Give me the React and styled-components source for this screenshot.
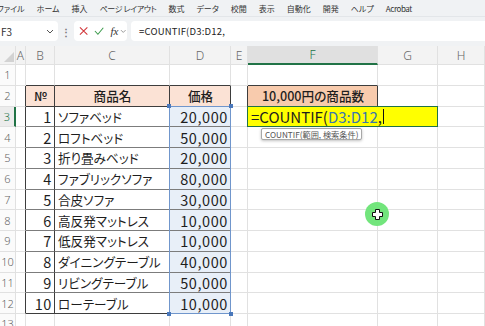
import React from 'react'
import styled, { createGlobalStyle } from 'styled-components'

const GlobalStyle = createGlobalStyle`
  html, body { margin: 0; padding: 0; overflow: hidden; }
  body {
    font-family: "Noto Sans CJK JP", "Noto Sans", sans-serif;
    font-feature-settings: "palt";
    background: #fff;
  }
`

const LIGHT = '#e1e1e1'
const DARK = '#3d3d3d'
const MID = '#7c7c7c'
const GREEN = '#217346'

const Frame = styled.div`
  position: relative;
  width: 485px;
  height: 326px;
  overflow: hidden;
  background: #f0f2f4;
`

const MenuBar = styled.div`
  display: flex;
  align-items: center;
  height: 16px;
  gap: 12px;
  font-size: 8px;
  color: #333;
  white-space: nowrap;
  border-bottom: 1px solid #e3e6e9;
`

const MenuItem = styled.span`
  margin-left: ${p => p.$first ? '-3px' : '0'};
  letter-spacing: ${p => p.$tight ? '-0.4px' : '0'};
`

const FormulaBar = styled.div`
  display: flex;
  align-items: center;
  height: 20px;
  margin-top: 4px;
  gap: 4px;
`

const NameBox = styled.div`
  display: flex;
  align-items: center;
  justify-content: space-between;
  width: 60px;
  height: 20px;
  box-sizing: border-box;
  padding: 0 4px 0 3px;
  margin-left: -2px;
  background: #fff;
  border-radius: 4px;
  font-size: 10px;
  color: #333;
`

const Dots = styled.div`
  width: 8px;
  display: flex;
  justify-content: center;
  color: #777;
  font-size: 10px;
  font-weight: bold;
`

const IconBox = styled.div`
  display: flex;
  align-items: center;
  gap: 6px;
  width: 53px;
  height: 20px;
  box-sizing: border-box;
  padding-left: 5px;
  background: #fff;
  border-radius: 4px;
`

const Fx = styled.span`
  font-family: "Liberation Serif", serif;
  font-style: italic;
  font-size: 11px;
  color: #333;
`

const FormulaInput = styled.div`
  flex: 1;
  height: 20px;
  display: flex;
  align-items: center;
  padding-left: 8px;
  background: #fff;
  border-radius: 4px 0 0 4px;
  font-size: 9.5px;
  color: #222;
  letter-spacing: 0.2px;
`

const Sheet = styled.div`
  display: grid;
  grid-template-columns: 16px 10px 29px 115px 61px 17px 130px 60px 47px;
  grid-template-rows: 19px repeat(13, 20.75px);
  margin-top: 5px;
  background: #fff;
`

const ColHead = styled.div`
  grid-row: 1;
  grid-column: ${p => p.$col + 1};
  display: flex;
  align-items: center;
  justify-content: center;
  box-sizing: border-box;
  background: ${p => p.$active ? '#e0e0e0' : '#f3f3f3'};
  border-right: 1px solid ${LIGHT};
  border-bottom: ${p => p.$active ? `2px solid ${GREEN}` : `1px solid ${LIGHT}`};
  color: ${p => p.$active ? GREEN : '#666'};
  font-family: "Noto Sans", sans-serif;
  font-size: 12px;
  font-weight: 300;
`

const Corner = styled.div`
  grid-row: 1;
  grid-column: 1;
  position: relative;
  background: #f3f3f3;
  border-right: 1px solid ${LIGHT};
  border-bottom: 1px solid ${LIGHT};
  box-sizing: border-box;
  &::after {
    content: '';
    position: absolute;
    right: 1px;
    bottom: 2px;
    border-left: 10px solid transparent;
    border-bottom: 10px solid #d2d2d2;
  }
`

const RowHead = styled.div`
  grid-row: ${p => p.$row + 1};
  grid-column: 1;
  display: flex;
  align-items: center;
  justify-content: center;
  box-sizing: border-box;
  background: ${p => p.$active ? '#ececec' : '#fbfbfb'};
  border-right: ${p => p.$active ? `2px solid ${GREEN}` : `1px solid ${LIGHT}`};
  border-bottom: 1px solid ${LIGHT};
  color: ${p => p.$active ? GREEN : '#666'};
  font-family: "Noto Sans", sans-serif;
  font-size: 11px;
  font-weight: 300;
`

const Cell = styled.div`
  grid-row: ${p => p.$row + 1};
  grid-column: ${p => p.$col + 1};
  display: flex;
  align-items: center;
  justify-content: ${p => p.$align || 'flex-start'};
  box-sizing: border-box;
  padding: 0 2px 0 3px;
  background: ${p => p.$bg || '#fff'};
  border-right: 1px solid ${p => p.$r};
  border-bottom: 1px solid ${p => p.$b};
  font-size: ${p => p.$num ? '14.5px' : '12.6px'};
  font-weight: ${p => p.$bold ? 500 : 400};
  letter-spacing: ${p => p.$num ? '0.6px' : '0'};
  color: #1e1e1e;
  white-space: nowrap;
`

const RangeBox = styled.div`
  grid-column: 5 / 6;
  grid-row: 4 / 14;
  position: relative;
  box-sizing: border-box;
  margin: -1px 0 0 -1px;
  border: 1.5px solid #7096cc;
  pointer-events: none;
`

const Handle = styled.span`
  position: absolute;
  width: 4px;
  height: 4px;
  background: #4a78bb;
  ${p => p.$top ? 'top: -3px;' : 'bottom: -3px;'}
  ${p => p.$left ? 'left: -3px;' : 'right: -3px;'}
`

const Editor = styled.div`
  grid-column: 7 / 9;
  grid-row: 4 / 5;
  position: relative;
  display: flex;
  align-items: center;
  box-sizing: border-box;
  margin: -1px 0 0 -1px;
  padding-left: 3px;
  background: #ffff00;
  border: 1.5px solid ${GREEN};
  font-size: 15px;
  color: #1e1e1e;
  white-space: nowrap;
`

const Ref = styled.span`
  color: #3a78ad;
`

const Caret = styled.span`
  display: inline-block;
  width: 1px;
  height: 15px;
  margin-left: 1px;
  background: #111;
`

const Tooltip = styled.div`
  position: absolute;
  top: calc(100% + 2px);
  left: 13px;
  height: 10px;
  line-height: 10px;
  padding: 0 3px;
  background: #fff;
  border: 1px solid #a8a8a8;
  border-radius: 2px;
  box-shadow: 0 1px 3px rgba(0,0,0,0.25);
  font-size: 8.2px;
  color: #555;
`

const Pointer = styled.div`
  position: absolute;
  left: 365px;
  top: 202px;
  width: 24px;
  height: 24px;
  border-radius: 50%;
  background: #72e57c;
  display: flex;
  align-items: center;
  justify-content: center;
`

const items = [
  ['ソファベッド', '20,000'],
  ['ロフトベッド', '50,000'],
  ['折り畳みベッド', '20,000'],
  ['ファブリックソファ', '80,000'],
  ['合皮ソファ', '30,000'],
  ['高反発マットレス', '10,000'],
  ['低反発マットレス', '10,000'],
  ['ダイニングテーブル', '40,000'],
  ['リビングテーブル', '50,000'],
  ['ローテーブル', '10,000'],
]

const menus = ['ファイル', 'ホーム', '挿入', 'ページ レイアウト', '数式', 'データ', '校閲', '表示', '自動化', '開発', 'ヘルプ', 'Acrobat']
const cols = ['A', 'B', 'C', 'D', 'E', 'F', 'G', 'H']

// border colours of a cell, c: 1=A ... 8=H
function rightOf(r, c) {
  if (r >= 2 && r <= 12 && c >= 1 && c <= 4) return DARK
  if (r === 2 && (c === 5 || c === 6)) return DARK
  return LIGHT
}
function bottomOf(r, c) {
  if (c >= 2 && c <= 4) {
    if (r === 1 || r === 2 || r === 12) return DARK
    if (r > 2 && r < 12) return MID
  }
  if (c === 6 && (r === 1 || r === 2)) return DARK
  return LIGHT
}

function content(r, c) {
  if (r === 2) {
    if (c === 2) return { text: '№', align: 'center', bold: true, bg: '#fbe2d5' }
    if (c === 3) return { text: '商品名', align: 'center', bold: true, bg: '#fbe2d5' }
    if (c === 4) return { text: '価格', align: 'center', bold: true, bg: '#fbe2d5' }
    if (c === 6) return { text: '10,000円の商品数', align: 'center', bold: true, bg: '#f8cbad' }
  }
  if (r >= 3 && r <= 12) {
    const it = items[r - 3]
    if (c === 2) return { text: String(r - 2), align: 'flex-end', num: true }
    if (c === 3) return { text: it[0] }
    if (c === 4) return { text: it[1], align: 'flex-end', num: true, bg: '#e8eff8' }
  }
  return { text: '' }
}

function CrossCursor() {
  return (
    <svg width="11" height="11" viewBox="0 0 11 11">
      <path d="M3.5 0.5h4v3h3v4h-3v3h-4v-3h-3v-4h3z" fill="#fff" stroke="#111" strokeWidth="1" />
    </svg>
  )
}

export default function App() {
  const cells = []
  for (let r = 1; r <= 13; r++) {
    cells.push(<RowHead key={`h${r}`} $row={r} $active={r === 3}>{r}</RowHead>)
    for (let c = 1; c <= 8; c++) {
      const k = content(r, c)
      cells.push(
        <Cell
          key={`${r}-${c}`}
          $row={r}
          $col={c}
          $r={rightOf(r, c)}
          $b={bottomOf(r, c)}
          $align={k.align}
          $bold={k.bold}
          $num={k.num}
          $bg={k.bg}
        >
          {k.text}
        </Cell>
      )
    }
  }

  return (
    <>
      <GlobalStyle />
      <Frame>
        <MenuBar>
          {menus.map((m, i) => (
            <MenuItem key={m} $first={i === 0} $tight={m.length > 5}>{m}</MenuItem>
          ))}
        </MenuBar>
        <FormulaBar>
          <NameBox>
            <span>F3</span>
            <svg width="8" height="5" viewBox="0 0 8 5"><path d="M1 1l3 3 3-3" fill="none" stroke="#555" strokeWidth="1" /></svg>
          </NameBox>
          <Dots>⋮</Dots>
          <IconBox>
            <svg width="10" height="10" viewBox="0 0 10 10"><path d="M1 1l8 8M9 1l-8 8" stroke="#d13438" strokeWidth="1.1" /></svg>
            <svg width="11" height="10" viewBox="0 0 11 10"><path d="M1 5l3.2 3.5L10 1.5" fill="none" stroke="#3a9a4a" strokeWidth="1.1" /></svg>
            <Fx>fx</Fx>
            <svg width="7" height="5" viewBox="0 0 7 5" style={{ marginLeft: -4 }}><path d="M1 1l2.5 2.5L6 1" fill="none" stroke="#888" strokeWidth="0.9" /></svg>
          </IconBox>
          <FormulaInput>=COUNTIF(D3:D12,</FormulaInput>
        </FormulaBar>
        <Sheet>
          <Corner />
          {cols.map((l, i) => <ColHead key={l} $col={i + 1} $active={l === 'F'}>{l}</ColHead>)}
          {cells}
          <RangeBox>
            <Handle $top $left />
            <Handle $top />
            <Handle $left />
            <Handle />
          </RangeBox>
          <Editor>
            =COUNTIF(<Ref>D3:D12</Ref>,<Caret />
            <Tooltip>COUNTIF(範囲, 検索条件)</Tooltip>
          </Editor>
        </Sheet>
        <Pointer><CrossCursor /></Pointer>
      </Frame>
    </>
  )
}
